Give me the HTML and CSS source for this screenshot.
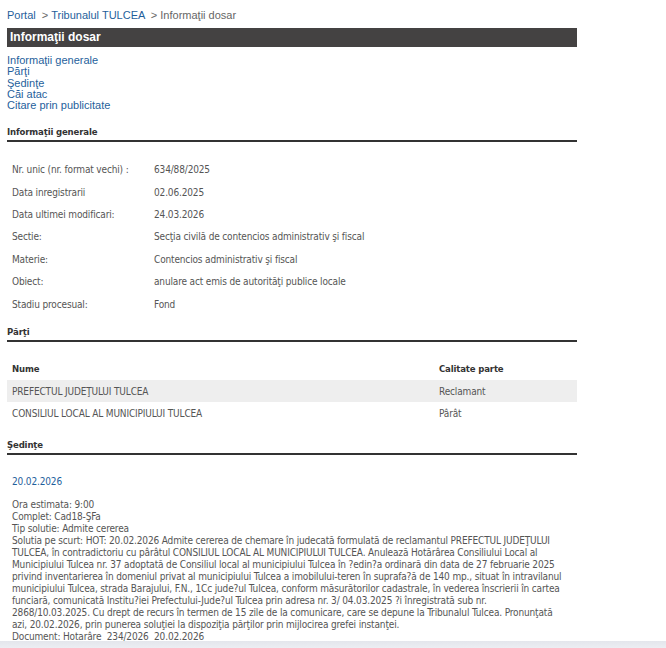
FILE: index.html
```html
<!DOCTYPE html>
<html lang="ro">
<head>
    <meta charset="UTF-8">
    <title>Informaţii dosar</title>
    <link rel="stylesheet" href="styles.css">
</head>
<body>
    <div class="pagina">
        <!-- Navigare -->
        <div class="breadcrumb">
            <a href="#">Portal</a> &nbsp;&gt; <a href="#">Tribunalul TULCEA</a> &nbsp;&gt; Informaţii dosar
        </div>

        <div class="bara-titlu">Informaţii dosar</div>

        <ul class="meniu">
            <li><a href="#generale">Informaţii generale</a></li>
            <li><a href="#parti">Părţi</a></li>
            <li><a href="#sedinte">Şedinţe</a></li>
            <li><a href="#">Căi atac</a></li>
            <li><a href="#">Citare prin publicitate</a></li>
        </ul>

        <!-- Informaţii generale -->
        <h3 class="sectiune" id="generale">Informaţii generale</h3>
        <table class="detalii">
            <tr><td class="eticheta">Nr. unic (nr. format vechi) :</td><td>634/88/2025</td></tr>
            <tr><td class="eticheta">Data inregistrarii</td><td>02.06.2025</td></tr>
            <tr><td class="eticheta">Data ultimei modificari:</td><td>24.03.2026</td></tr>
            <tr><td class="eticheta">Sectie:</td><td>Secţia civilă de contencios administrativ şi fiscal</td></tr>
            <tr><td class="eticheta">Materie:</td><td>Contencios administrativ şi fiscal</td></tr>
            <tr><td class="eticheta">Obiect:</td><td>anulare act emis de autorităţi publice locale</td></tr>
            <tr><td class="eticheta">Stadiu procesual:</td><td>Fond</td></tr>
        </table>

        <!-- Părţi -->
        <h3 class="sectiune" id="parti">Părţi</h3>
        <table class="parti">
            <tr><th>Nume</th><th class="calitate">Calitate parte</th></tr>
            <tr class="impar"><td>PREFECTUL JUDEŢULUI TULCEA</td><td class="calitate">Reclamant</td></tr>
            <tr><td>CONSILIUL LOCAL AL MUNICIPIULUI TULCEA</td><td class="calitate">Pârât</td></tr>
        </table>

        <!-- Şedinţe -->
        <h3 class="sectiune" id="sedinte">Şedinţe</h3>
        <div class="sedinta">
            <div class="data-sedinta">20.02.2026</div>
            <div class="text-sedinta">
                Ora estimata: 9:00<br>
                Complet: Cad18-ŞFa<br>
                Tip solutie: Admite cererea<br>
                Solutia pe scurt: HOT: 20.02.2026 Admite cererea de chemare în judecată formulată de reclamantul PREFECTUL JUDEŢULUI TULCEA, în contradictoriu cu pârâtul CONSILIUL LOCAL AL MUNICIPIULUI TULCEA. Anulează Hotărârea Consiliului Local al Municipiului Tulcea nr. 37 adoptată de Consiliul local al municipiului Tulcea în ?edin?a ordinară din data de 27 februarie 2025 privind inventarierea în domeniul privat al municipiului Tulcea a imobilului-teren în suprafa?ă de 140 mp., situat în intravilanul municipiului Tulcea, strada Barajului, F.N., 1Cc jude?ul Tulcea, conform măsurătorilor cadastrale, în vederea înscrierii în cartea funciară, comunicată Institu?iei Prefectului-Jude?ul Tulcea prin adresa nr. 3/ 04.03.2025 ?i înregistrată sub nr. 2868/10.03.2025. Cu drept de recurs în termen de 15 zile de la comunicare, care se depune la Tribunalul Tulcea. Pronunţată azi, 20.02.2026, prin punerea soluţiei la dispoziţia părţilor prin mijlocirea grefei instanţei.<br>
                Document: Hotarâre&nbsp; 234/2026&nbsp; 20.02.2026
            </div>
        </div>
    </div>

    <div class="bara-jos"></div>
</body>
</html>
```

FILE: styles.css
```css
/* Reset */
* {
    margin: 0;
    padding: 0;
    box-sizing: border-box;
}

body {
    font-family: "DejaVu Sans Condensed", "DejaVu Sans", Tahoma, sans-serif;
    font-size: 10px;
    letter-spacing: -0.15px;
    color: #555;
    background: #fff;
}

a {
    color: #1f5f9c;
    text-decoration: none;
}

.pagina {
    width: 577px;
    padding: 9px 0 0 7px;
}

/* Breadcrumb */
.breadcrumb {
    font-family: "Liberation Sans", Arial, sans-serif;
    font-size: 11px;
    line-height: 13px;
    letter-spacing: 0;
    color: #666;
}

/* Bara de titlu */
.bara-titlu {
    margin-top: 6px;
    height: 19px;
    line-height: 19px;
    padding-left: 3px;
    background: #444242;
    color: #fff;
    font-family: "Liberation Sans", Arial, sans-serif;
    font-size: 12px;
    font-weight: bold;
    letter-spacing: 0;
}

/* Meniu */
.meniu {
    list-style: none;
    margin-top: 8px;
    font-family: "Liberation Sans", Arial, sans-serif;
    font-size: 11px;
    line-height: 11.3px;
    letter-spacing: 0;
}

/* Titluri de sectiune */
.sectiune {
    margin-top: 15px;
    padding-bottom: 2px;
    border-bottom: 2px solid #333;
    font-size: 9.5px;
    font-weight: bold;
    color: #333;
    line-height: 12px;
}

/* Tabel detalii */
.detalii {
    border-collapse: collapse;
    margin-top: 16px;
}

.detalii td {
    height: 22.4px;
    padding: 0 5px;
    vertical-align: middle;
}

.detalii .eticheta {
    width: 142px;
}

#parti {
    margin-top: 11px;
}

/* Tabel parti */
.parti {
    width: 100%;
    border-collapse: collapse;
    margin-top: 14px;
}

.parti th {
    text-align: left;
    font-size: 9.5px;
    font-weight: bold;
    color: #333;
    height: 24px;
    padding: 0 5px;
}

.parti td {
    height: 22px;
    padding: 0 5px;
}

.parti .calitate {
    width: 143px;
}

.parti .impar td {
    background: #eee;
}

#sedinte {
    margin-top: 15px;
}

/* Sedinte */
.sedinta {
    padding: 20px 12px 0 5px;
}

.data-sedinta {
    color: #1f5f9c;
    font-size: 10px;
    line-height: 13px;
}

.text-sedinta {
    margin-top: 11px;
    line-height: 12px;
}

/* Bara de jos */
.bara-jos {
    position: fixed;
    left: 0;
    right: 0;
    bottom: 0;
    height: 7px;
    background: linear-gradient(#e4e6ec, #eceef3);
}
```
